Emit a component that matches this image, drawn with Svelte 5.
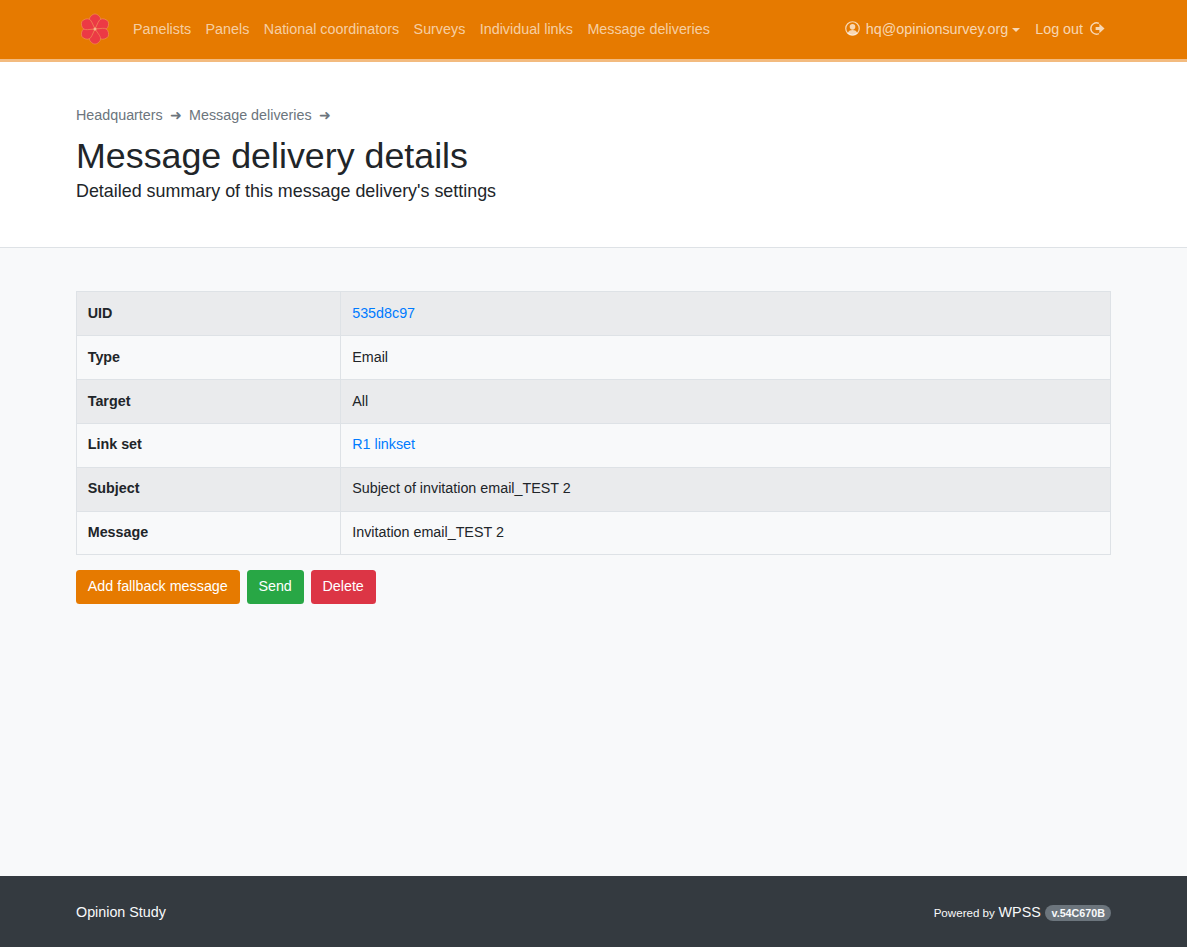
<script>
    const links = ["Panelists", "Panels", "National coordinators", "Surveys", "Individual links", "Message deliveries"];
    const rows = [
        { label: "UID", value: "535d8c97", link: true },
        { label: "Type", value: "Email" },
        { label: "Target", value: "All" },
        { label: "Link set", value: "R1 linkset", link: true },
        { label: "Subject", value: "Subject of invitation email_TEST 2" },
        { label: "Message", value: "Invitation email_TEST 2" }
    ];
    const petals = [0, 60, 120, 180, 240, 300];
</script>

<div class="page">
    <nav class="navbar">
        <a class="brand" href="#home" aria-label="Home">
            <svg width="32" height="32" viewBox="0 0 32 32">
                {#each petals as a}
                    <path transform="rotate({a} 16 16)" d="M16 16 L11.6 9.7 A5.4 5.4 0 1 1 20.4 9.7 Z" fill="#ec3a45" stroke="#f0945a" stroke-width="0.6" stroke-linejoin="round" />
                {/each}
                <circle cx="16" cy="16" r="1.5" fill="#f6b48c" />
            </svg>
        </a>
        <ul class="nav-links">
            {#each links as link}
                <li><a href="#{link}">{link}</a></li>
            {/each}
        </ul>
        <div class="nav-right">
            <a class="user" href="#user">
                <svg class="ico" width="15" height="15" viewBox="0 0 16 16">
                    <circle cx="8" cy="8" r="7.2" fill="none" stroke="currentColor" stroke-width="1.3" />
                    <circle cx="8" cy="6.2" r="3" fill="currentColor" />
                    <path d="M2.8 13 C4 10.2 6 9.6 8 9.6 C10 9.6 12 10.2 13.2 13 C11.8 14.6 10 15.2 8 15.2 C6 15.2 4.2 14.6 2.8 13 Z" fill="currentColor" />
                </svg>
                <span>hq@opinionsurvey.org</span>
                <i class="caret"></i>
            </a>
            <a class="logout" href="#logout">
                <span>Log out</span>
                <svg class="ico" width="15" height="15" viewBox="0 0 16 16">
                    <path d="M9.5 2.6 A6 6 0 1 0 9.5 13.4" fill="none" stroke="currentColor" stroke-width="1.5" />
                    <path d="M6 6.3 H10 V3 L15.5 8 L10 13 V9.7 H6 Z" fill="currentColor" />
                </svg>
            </a>
        </div>
    </nav>

    <header class="head">
        <div class="crumbs">
            <a href="#hq">Headquarters</a><span class="arrow">➜</span><a href="#md">Message deliveries</a><span class="arrow">➜</span>
        </div>
        <h1>Message delivery details</h1>
        <p class="lead">Detailed summary of this message delivery's settings</p>
    </header>

    <main class="content">
        <table>
            <tbody>
                {#each rows as row}
                    <tr>
                        <th>{row.label}</th>
                        <td>
                            {#if row.link}<a href="#v">{row.value}</a>{:else}{row.value}{/if}
                        </td>
                    </tr>
                {/each}
            </tbody>
        </table>
        <div class="actions">
            <button class="orange">Add fallback message</button>
            <button class="green">Send</button>
            <button class="red">Delete</button>
        </div>
    </main>

    <footer class="foot">
        <span class="study">Opinion Study</span>
        <span class="powered">Powered by <span class="wpss">WPSS</span> <span class="badge">v.54C670B</span></span>
    </footer>
</div>

<style>
:global(body) {
    margin: 0;
    font-family: "Liberation Sans", Arial, sans-serif;
    font-size: 14.32px;
    color: #212529;
}
a {
    text-decoration: none;
}
.page {
    display: flex;
    flex-direction: column;
    min-height: 947px;
    background: #f8f9fa;
}
.navbar {
    display: flex;
    align-items: center;
    height: 57px;
    padding: 0 76px 2px 79px;
    background: #e67a00;
    border-bottom: 3px solid #f3bb7f;
}
.brand {
    display: flex;
    margin-right: 22px;
}
.nav-links {
    display: flex;
    gap: 14.5px;
    margin: 0;
    padding: 0;
    list-style: none;
}
.navbar a {
    color: rgba(255, 255, 255, 0.65);
}
.nav-right {
    display: flex;
    align-items: center;
    gap: 15px;
    margin-left: auto;
    padding-right: 6px;
}
.navbar .user, .navbar .logout {
    display: flex;
    align-items: center;
    color: rgba(255, 255, 255, 0.7);
}
.user span {
    margin: 0 4px 0 6px;
}
.logout span {
    margin-right: 7px;
}
.caret {
    width: 0;
    height: 0;
    margin-top: 2px;
    border-top: 4px solid currentColor;
    border-left: 4px solid transparent;
    border-right: 4px solid transparent;
}
.head {
    height: 185px;
    padding: 0 76px;
    background: #fff;
    border-bottom: 1px solid #dee2e6;
}
.crumbs {
    padding-top: 43px;
    line-height: 21.48px;
    color: #6c757d;
}
.crumbs a {
    color: #6c757d;
}
.arrow {
    margin: 0 7.16px;
}
h1 {
    margin: 9px 0 0;
    font-size: 35.8px;
    font-weight: 400;
    line-height: 43px;
}
.lead {
    margin: 0;
    font-size: 17.9px;
    line-height: 26.85px;
}
.content {
    flex: 1;
    padding: 43.12px 76px 0;
}
table {
    width: 100%;
    border-collapse: collapse;
    line-height: 21.48px;
}
tr:nth-child(odd) {
    background: #eaebed;
}
th, td {
    padding: 10.71px 10.74px;
    border: 1px solid #dee2e6;
    text-align: left;
}
th {
    width: 242px;
    font-weight: 700;
}
td a {
    color: #007bff;
}
.actions {
    display: flex;
    gap: 7.16px;
    margin-top: 14.7px;
}
button {
    padding: 5px 10.74px 5.74px;
    border: 1px solid transparent;
    border-radius: 3.5px;
    color: #fff;
    font: inherit;
    line-height: 21.48px;
}
.orange { background: #e67a00; }
.green { background: #28a745; }
.red { background: #dc3545; }
.foot {
    display: flex;
    align-items: center;
    justify-content: space-between;
    height: 71px;
    padding: 0 76px;
    background: #343a40;
    color: #f8f9fa;
}
.powered {
    margin-top: 2px;
    font-size: 11.6px;
}
.wpss {
    margin: 0 1.5px 0 0.5px;
    font-size: 14.32px;
}
.badge {
    display: inline-block;
    padding: 3px 6px;
    border-radius: 8px;
    background: #6c757d;
    font-size: 10.74px;
    font-weight: 700;
    line-height: 1;
}
</style>
